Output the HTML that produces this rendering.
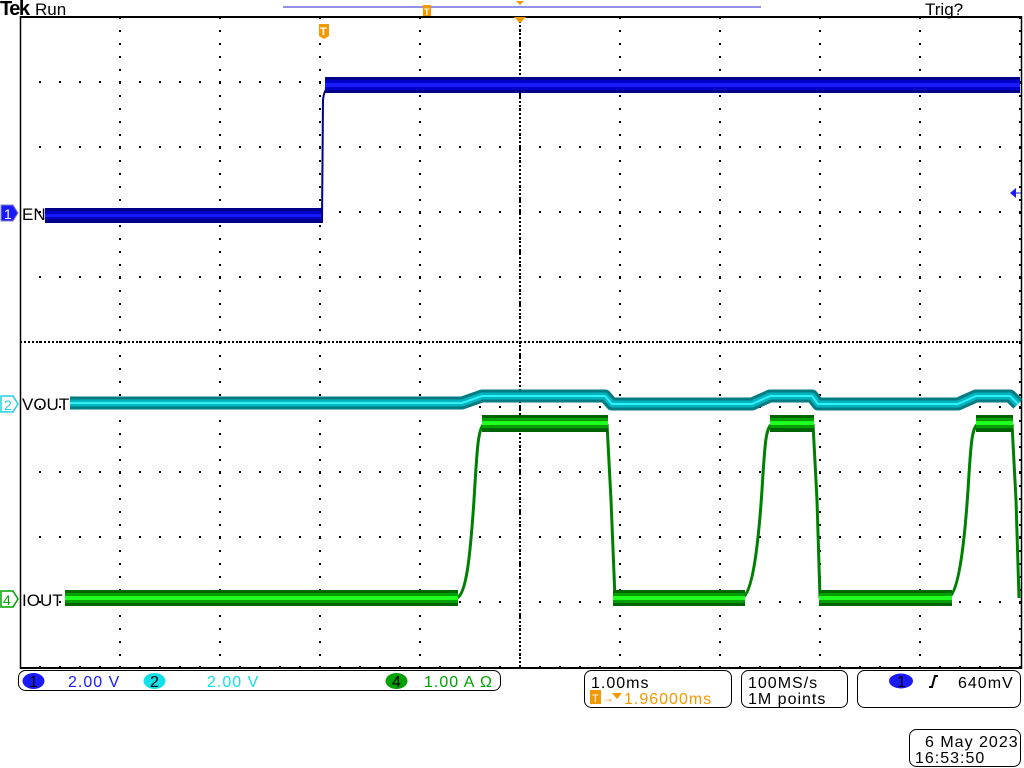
<!DOCTYPE html>
<html><head><meta charset="utf-8"><style>
html,body{margin:0;padding:0;background:#fff;width:1024px;height:768px;overflow:hidden}
svg{display:block}
text{font-family:"Liberation Sans",sans-serif}
</style></head><body>
<svg width="1024" height="768" viewBox="0 0 1024 768" xmlns="http://www.w3.org/2000/svg">
<defs>
<pattern id="pc" patternUnits="userSpaceOnUse" x="19" y="17" width="100" height="13"><rect x="0" y="0" width="2" height="2" fill="#000"/></pattern>
<pattern id="pr" patternUnits="userSpaceOnUse" x="19" y="16" width="20" height="65"><rect x="0" y="0" width="2" height="2" fill="#000"/></pattern>
<pattern id="pv" patternUnits="userSpaceOnUse" x="519" y="17" width="4" height="4"><rect x="0" y="0" width="2" height="2" fill="#000"/></pattern>
<pattern id="ph" patternUnits="userSpaceOnUse" x="20" y="341" width="4" height="4"><rect x="0" y="0" width="2" height="2" fill="#000"/></pattern>
</defs>
<rect x="20" y="17" width="1001" height="651" fill="url(#pc)"/>
<rect x="20" y="17" width="1001" height="652" fill="url(#pr)"/>
<rect x="519" y="17" width="2" height="651" fill="url(#pv)"/>
<rect x="20" y="341" width="1001" height="2" fill="url(#ph)"/>
<line x1="20" y1="17" x2="1021" y2="17" stroke="#000" stroke-width="2"/>
<line x1="20" y1="668" x2="1021" y2="668" stroke="#000" stroke-width="2"/>
<line x1="20.5" y1="16" x2="20.5" y2="669" stroke="#000" stroke-width="1.5"/>
<line x1="1021.5" y1="16" x2="1021.5" y2="669" stroke="#000" stroke-width="1.5"/>

<text x="0" y="15" font-family="Liberation Serif,serif" font-weight="bold" font-size="20" fill="#000" letter-spacing="-1.5">Tek</text>
<text x="35" y="15" font-size="17" fill="#000">Run</text>
<text x="925" y="15" font-size="17" fill="#000">Trig?</text>
<line x1="283" y1="7" x2="761" y2="7" stroke="#2020d0" stroke-width="1"/>
<rect x="423" y="5" width="8" height="11" fill="#f39800"/>
<text x="424" y="15" font-size="9" font-weight="bold" fill="#fff">T</text>
<polygon points="516,1 524,1 520,5" fill="#f39800"/>
<polygon points="514,17 526,17 520,23" fill="#f39800"/>
<path d="M319 24 h10 v12 l-5 3 l-5 -3z" fill="#f39800"/>
<text x="320" y="35" font-size="11" font-weight="bold" fill="#fff">T</text>
<polygon points="1010,193 1016,188 1016,198" fill="#1a1aff"/>
<line x1="1014" y1="193" x2="1021" y2="193" stroke="#1a1aff"/>

<rect x="45" y="208" width="278" height="15" fill="#00008a"/>
<rect x="45" y="211" width="278" height="8" fill="#0000c8"/>
<rect x="45" y="214" width="278" height="3" fill="#1a1aff"/>
<path d="M322 222 L323 100 Q324 90 328 88" stroke="#00008a" stroke-width="2" fill="none"/>
<rect x="325" y="77" width="695" height="16" fill="#00008a"/>
<rect x="325" y="80" width="695" height="10" fill="#0000c8"/>
<rect x="325" y="83" width="695" height="4" fill="#1a1aff"/>

<g fill="none" stroke-linejoin="round">
<path d="M70 403 H462 L482 396 H605 L612 404 H752 L770 396 H812 L818 404 H958 L976 396 H1010 L1018 404" stroke="#007b80" stroke-width="13"/>
<path d="M70 403 H462 L482 396 H605 L612 404 H752 L770 396 H812 L818 404 H958 L976 396 H1010 L1018 404" stroke="#00b5c0" stroke-width="7"/>
<path d="M70 403 H462 L482 396 H605 L612 404 H752 L770 396 H812 L818 404 H958 L976 396 H1010 L1018 404" stroke="#30f0f8" stroke-width="2"/>
</g>

<g fill="none" stroke="#008000" stroke-width="3">
<path d="M457 598 C466 594 470 560 474 500 C477 450 478 428 484 424"/>
<path d="M607 424 L611 500 L615 598"/>
<path d="M742 598 C752 594 758 550 762 490 C765 440 766 428 772 424"/>
<path d="M813 424 L817 500 L820 598"/>
<path d="M948 598 C958 594 964 550 968 490 C971 440 972 428 978 424"/>
<path d="M1012 424 L1016 500 L1019 598"/>
</g>
<g>
<rect x="65" y="590" width="393" height="16" fill="#006400"/><rect x="65" y="593" width="393" height="10" fill="#00a000"/><rect x="65" y="596" width="393" height="4" fill="#20ff20"/>
<rect x="482" y="415" width="126" height="17" fill="#006400"/><rect x="482" y="418" width="126" height="10" fill="#00a000"/><rect x="482" y="421" width="126" height="4" fill="#20ff20"/>
<rect x="613" y="590" width="132" height="16" fill="#006400"/><rect x="613" y="593" width="132" height="10" fill="#00a000"/><rect x="613" y="596" width="132" height="4" fill="#20ff20"/>
<rect x="770" y="415" width="44" height="17" fill="#006400"/><rect x="770" y="418" width="44" height="10" fill="#00a000"/><rect x="770" y="421" width="44" height="4" fill="#20ff20"/>
<rect x="819" y="590" width="133" height="16" fill="#006400"/><rect x="819" y="593" width="133" height="10" fill="#00a000"/><rect x="819" y="596" width="133" height="4" fill="#20ff20"/>
<rect x="976" y="415" width="37" height="17" fill="#006400"/><rect x="976" y="418" width="37" height="10" fill="#00a000"/><rect x="976" y="421" width="37" height="4" fill="#20ff20"/>
</g>

<path d="M1 205 h12 l5 8 l-5 8 h-12z" fill="#1a1aff" stroke="#8080c0"/>
<text x="4" y="219" font-size="14" fill="#fff">1</text>
<text x="22" y="220" font-size="17" fill="#000">EN</text>
<path d="M1 396 h12 l5 8 l-5 8 h-12z" fill="#fff" stroke="#20d0e0" stroke-width="1.5"/>
<text x="4" y="410" font-size="14" fill="#20d0e0">2</text>
<text x="22" y="410" font-size="17" fill="#000">VOUT</text>
<path d="M1 591 h12 l5 8 l-5 8 h-12z" fill="#fff" stroke="#00a000" stroke-width="1.5"/>
<text x="3" y="605" font-size="14" fill="#00a000">4</text>
<text x="22" y="606" font-size="17" fill="#000">IOUT</text>

<rect x="18.5" y="670.5" width="482" height="20" rx="7" fill="#fff" stroke="#000"/>
<ellipse cx="33.5" cy="681" rx="11" ry="8" fill="#1a1aff"/>
<text x="29" y="687" font-size="16" fill="#000">1</text>
<text x="68" y="687" font-size="16" fill="#1a1aff" letter-spacing="1">2.00 V</text>
<ellipse cx="154.5" cy="681" rx="11" ry="8" fill="#10e0e8"/>
<text x="150" y="687" font-size="16" fill="#000">2</text>
<text x="207" y="687" font-size="16" fill="#10e0e8" letter-spacing="1">2.00 V</text>
<ellipse cx="396.5" cy="681" rx="11" ry="8" fill="#00a000"/>
<text x="392" y="687" font-size="16" fill="#000">4</text>
<text x="424" y="687" font-size="16" fill="#00a000" letter-spacing="1">1.00 A  Ω</text>

<rect x="584.5" y="670.5" width="147" height="37" rx="7" fill="#fff" stroke="#000"/>
<text x="591" y="688" font-size="16" fill="#000" letter-spacing="1">1.00ms</text>
<rect x="590" y="690" width="11" height="14" fill="#f39800"/>
<text x="592" y="702" font-size="11" fill="#fff">T</text>
<text x="602" y="702" font-size="12" fill="#f39800">→</text>
<polygon points="612,693 622,693 617,699" fill="#f39800"/>
<text x="624" y="704" font-size="16" fill="#f39800" letter-spacing="1">1.96000ms</text>

<rect x="741.5" y="670.5" width="106" height="37" rx="7" fill="#fff" stroke="#000"/>
<text x="748" y="688" font-size="16" fill="#000" letter-spacing="1">100MS/s</text>
<text x="748" y="704" font-size="16" fill="#000" letter-spacing="1">1M points</text>

<rect x="857.5" y="670.5" width="163" height="37" rx="7" fill="#fff" stroke="#000"/>
<ellipse cx="901" cy="681" rx="12" ry="7.5" fill="#1a1aff"/>
<text x="897" y="687" font-size="16" fill="#000">1</text>
<path d="M929 687 h3 l3 -11 h3" stroke="#000" stroke-width="2" fill="none"/>
<text x="958" y="688" font-size="16" fill="#000" letter-spacing="1">640mV</text>

<rect x="909.5" y="729.5" width="111" height="37" rx="7" fill="#fff" stroke="#000"/>
<text x="925" y="747" font-size="16" fill="#000" letter-spacing="1">6 May 2023</text>
<text x="915" y="763" font-size="16" fill="#000" letter-spacing="1">16:53:50</text>
</svg>
</body></html>
